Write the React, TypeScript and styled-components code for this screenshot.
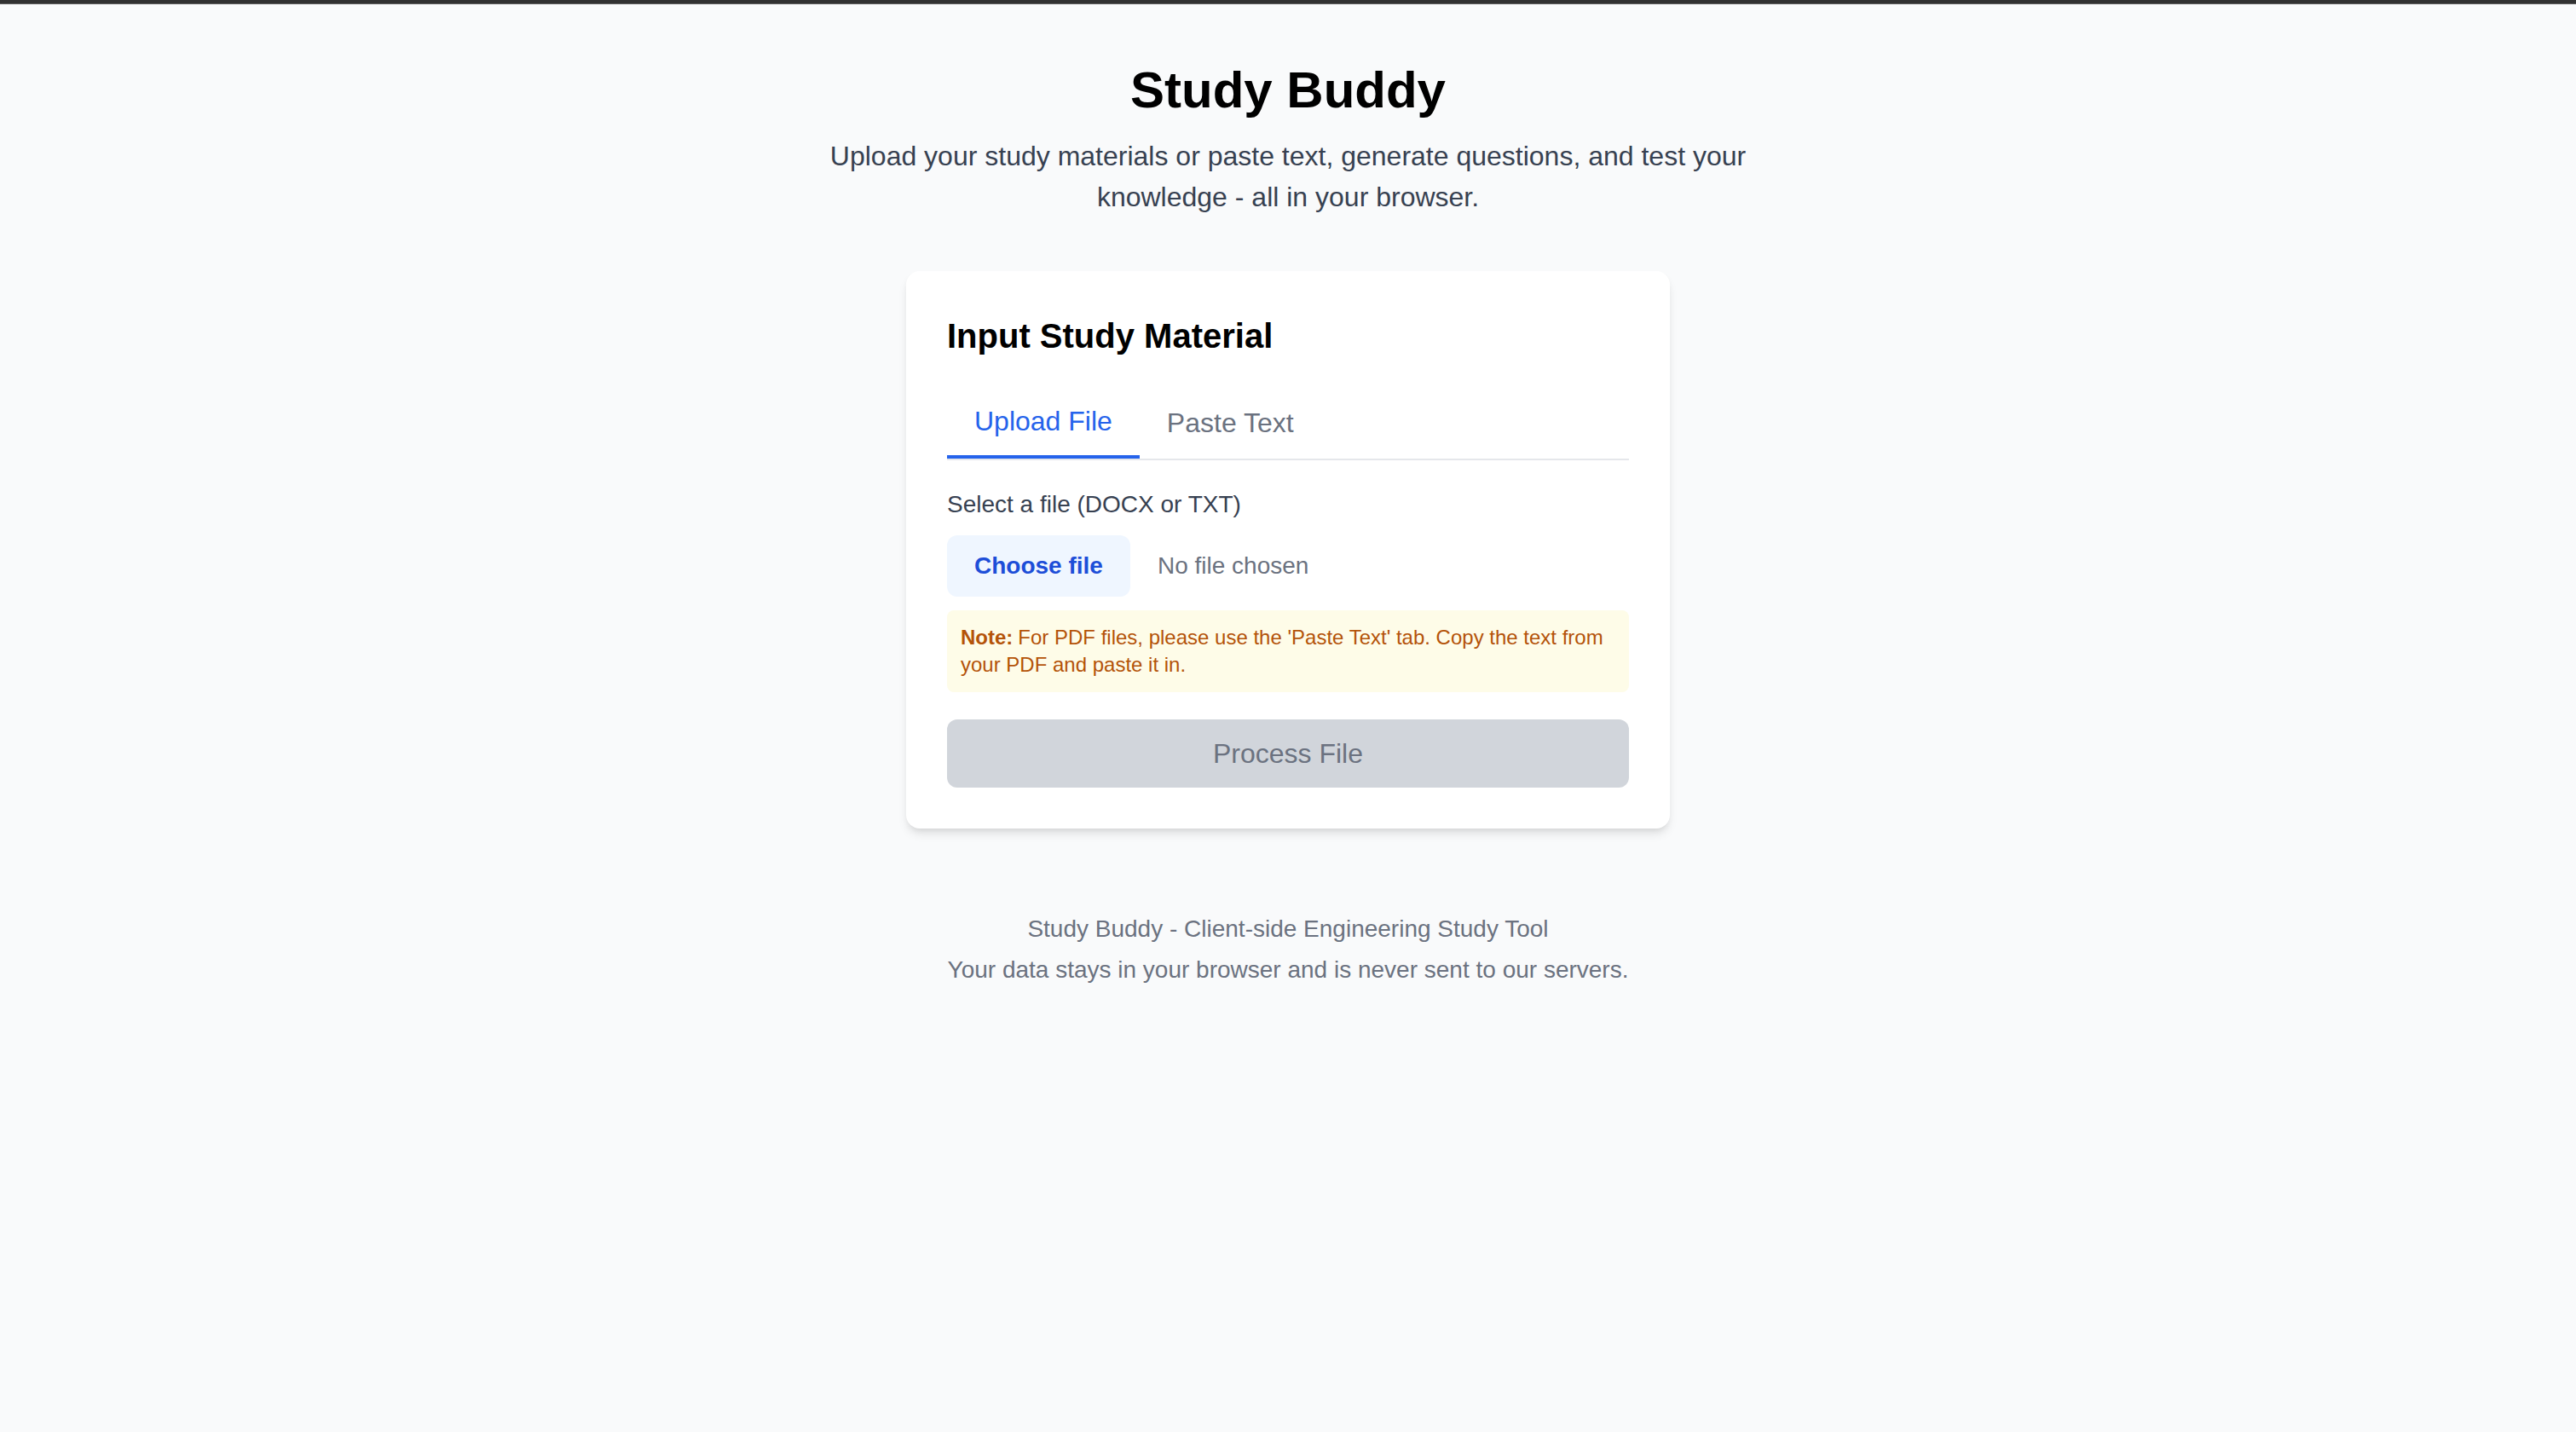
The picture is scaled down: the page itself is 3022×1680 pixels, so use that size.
import React from "react";
import styled, { createGlobalStyle } from "styled-components";

const GlobalStyle = createGlobalStyle`
  html, body {
    margin: 0;
    padding: 0;
    background: #f9fafb;
    font-family: "Liberation Sans", Arial, Helvetica, sans-serif;
  }
  * { box-sizing: border-box; }
`;

const TopBar = styled.div`
  height: 5px;
  background: #323232;
  border-bottom: 1px solid #5e5e5e;
`;

const Page = styled.main`
  padding: 65px 32px 64px;
  display: flex;
  flex-direction: column;
  align-items: center;
`;

const Header = styled.header`
  display: flex;
  flex-direction: column;
  align-items: center;
  text-align: center;
  margin-bottom: 63px;
`;

const Title = styled.h1`
  margin: 0 0 17px;
  font-size: 60px;
  line-height: 72px;
  font-weight: 700;
  color: #000;
`;

const Subtitle = styled.p`
  margin: 0;
  max-width: 1152px;
  font-size: 32px;
  line-height: 48px;
  color: #374151;
`;

const Card = styled.section`
  width: 896px;
  background: #ffffff;
  border-radius: 16px;
  padding: 48px;
  box-shadow: 0 8px 12px -2px rgba(0, 0, 0, 0.1), 0 4px 8px -4px rgba(0, 0, 0, 0.1);
`;

const CardTitle = styled.h2`
  margin: 0 0 32px;
  font-size: 40px;
  line-height: 56px;
  font-weight: 700;
  color: #000;
`;

const TabList = styled.div`
  display: flex;
  align-items: flex-end;
  border-bottom: 2px solid #e5e7eb;
`;

const Tab = styled.button<{ $active?: boolean }>`
  appearance: none;
  background: none;
  border: none;
  border-bottom: ${(p) => (p.$active ? "4px solid #2563eb" : "2px solid transparent")};
  padding: 16px 32px;
  margin: 0;
  font-family: inherit;
  font-size: 32px;
  line-height: 48px;
  color: ${(p) => (p.$active ? "#2563eb" : "#6b7280")};
  cursor: pointer;
`;

const Panel = styled.div`
  margin-top: 32px;
  display: flex;
  flex-direction: column;
`;

const Label = styled.label`
  display: block;
  margin-bottom: 16px;
  font-size: 28px;
  line-height: 40px;
  color: #374151;
`;

const FileRow = styled.div`
  display: flex;
  align-items: center;
`;

const FileButton = styled.button`
  appearance: none;
  border: none;
  margin: 0 32px 0 0;
  padding: 16px 32px;
  border-radius: 12px;
  background: #eff6ff;
  color: #1d4ed8;
  font-family: inherit;
  font-size: 28px;
  line-height: 40px;
  font-weight: 700;
  cursor: pointer;
`;

const FileName = styled.span`
  font-size: 28px;
  line-height: 40px;
  color: #6b7280;
`;

const Note = styled.p`
  margin: 16px 0 0;
  padding: 16px;
  border-radius: 8px;
  background: #fefce8;
  color: #b45309;
  font-size: 24px;
  line-height: 32px;
`;

const NoteLead = styled.b`
  font-weight: 700;
  margin-right: 6px;
`;

const ProcessButton = styled.button`
  appearance: none;
  border: none;
  margin-top: 32px;
  width: 100%;
  padding: 16px;
  border-radius: 12px;
  background: #d1d5db;
  color: #6b7280;
  font-family: inherit;
  font-size: 32px;
  line-height: 48px;
  cursor: not-allowed;
`;

const Footer = styled.footer`
  margin-top: 98px;
  text-align: center;
  color: #6b7280;
`;

const FooterLine = styled.p<{ $spaced?: boolean }>`
  margin: ${(p) => (p.$spaced ? "8px 0 0" : "0")};
  font-size: 28px;
  line-height: 40px;
`;

export default function App() {
  return (
    <>
      <GlobalStyle />
      <TopBar />
      <Page>
        <Header>
          <Title>Study Buddy</Title>
          <Subtitle>
            Upload your study materials or paste text, generate questions, and test your knowledge - all in your browser.
          </Subtitle>
        </Header>
        <Card>
          <CardTitle>Input Study Material</CardTitle>
          <TabList>
            <Tab $active>Upload File</Tab>
            <Tab>Paste Text</Tab>
          </TabList>
          <Panel>
            <Label>Select a file (DOCX or TXT)</Label>
            <FileRow>
              <FileButton>Choose file</FileButton>
              <FileName>No file chosen</FileName>
            </FileRow>
            <Note>
              <NoteLead>Note:</NoteLead>For PDF files, please use the 'Paste Text' tab. Copy the text from your PDF and paste it in.
            </Note>
            <ProcessButton disabled>Process File</ProcessButton>
          </Panel>
        </Card>
        <Footer>
          <FooterLine>Study Buddy - Client-side Engineering Study Tool</FooterLine>
          <FooterLine $spaced>Your data stays in your browser and is never sent to our servers.</FooterLine>
        </Footer>
      </Page>
    </>
  );
}
